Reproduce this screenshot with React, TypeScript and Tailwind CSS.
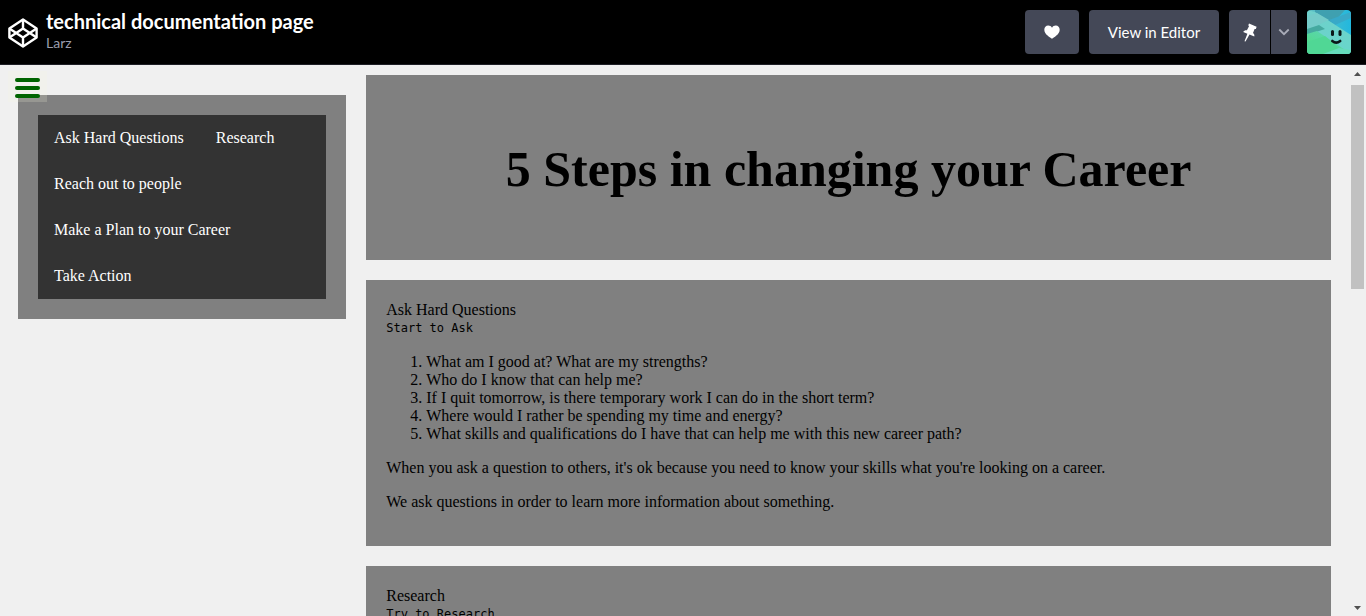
import type { ReactNode } from "react";

const navLinks = [
  { label: "Ask Hard Questions", href: "#Ask_Hard_Questions" },
  { label: "Research", href: "#Research" },
  { label: "Reach out to people", href: "#Reach_out_to_people" },
  { label: "Make a Plan to your Career", href: "#Make_a_Plan_to_your_Career" },
  { label: "Take Action", href: "#Take_Action" },
];

const questions = [
  "What am I good at? What are my strengths?",
  "Who do I know that can help me?",
  "If I quit tomorrow, is there temporary work I can do in the short term?",
  "Where would I rather be spending my time and energy?",
  "What skills and qualifications do I have that can help me with this new career path?",
];

function Logo() {
  return (
    <svg viewBox="0 0 30 30" className="h-[30px] w-[30px]" fill="none" stroke="#fff" strokeWidth="2.4" strokeLinejoin="round" aria-hidden="true">
      <path d="M15 1.500 28.600 10.400V19.600L15 28.500 1.400 19.600V10.400Z" />
      <path d="M15 1.500V10.600L28.600 19.600M15 10.600 1.400 19.600M15 28.500V19.400L1.400 10.400M15 19.400 28.600 10.400" />
    </svg>
  );
}

function Avatar() {
  return (
    <svg viewBox="0 0 44 44" className="h-11 w-11 rounded" role="img" aria-label="Profile">
      <defs>
        <linearGradient id="sky" x1="0" y1="0" x2="1" y2="0">
          <stop offset="0" stopColor="#62bfc0" />
          <stop offset="1" stopColor="#22b8de" />
        </linearGradient>
        <linearGradient id="grass" x1="0" y1="1" x2="1" y2="0">
          <stop offset="0" stopColor="#4fdc7c" />
          <stop offset="1" stopColor="#5fd3c4" />
        </linearGradient>
        <linearGradient id="band" x1="0" y1="0" x2="1" y2="1">
          <stop offset="0" stopColor="#6fcfcb" />
          <stop offset="1" stopColor="#68d6cb" />
        </linearGradient>
      </defs>
      <rect width="44" height="44" fill="url(#sky)" />
      <path d="M8 0H38L26 13 8 3Z" fill="#3fa0b0" />
      <path d="M22 10 44 2V8L28 15Z" fill="#38a9c8" />
      <path d="M0 0 8 2 44 25V44H0Z" fill="url(#band)" />
      <path d="M10 3 22 10 0 20V6Z" fill="#74cbc9" />
      <path d="M0 19 12 15 18 19 0 25Z" fill="#45a9a0" />
      <path d="M0 24 10 21 44 44H0Z" fill="url(#grass)" />
      <path d="M18 26 32 38 18 44H0V32Z" fill="#50d795" />
      <path d="M32 38 44 40V44H16Z" fill="#66dbbb" />
      <rect x="24" y="20" width="3" height="6" rx="1.5" fill="#0b1718" />
      <rect x="31.500" y="20" width="3" height="6" rx="1.5" fill="#0b1718" />
      <path d="M25.300 31Q29.200 34.200 33.200 31" fill="none" stroke="#0b1718" strokeWidth="2.6" strokeLinecap="round" />
    </svg>
  );
}

function TopBar() {
  const button = "flex h-11 items-center justify-center bg-[#444857] text-white";
  return (
    <header className="flex h-[65px] shrink-0 items-center justify-between border-b border-[#1e1f26] bg-black pr-[15px] pl-2 font-[Lato,sans-serif]">
      <div className="flex items-center gap-2">
        <a href="#home" aria-label="Home" className="mt-px">
          <Logo />
        </a>
        <div className="pb-0.5">
          <h1 className="text-[20px] leading-6 font-bold text-white">technical documentation page</h1>
          <a href="#author" className="block text-[14px] leading-5 text-[#9b9dad]">
            Larz
          </a>
        </div>
      </div>
      <div className="flex items-center gap-2.5">
        <button type="button" aria-label="Love" className={`${button} w-[54px] rounded`}>
          <svg viewBox="0 0 16 14" className="h-3.5 w-4" fill="currentColor">
            <path d="M8 13.800C6.600 12.500.3 9.500.3 4.700.3 2.300 2 .4 4.200.4 5.900.4 7.300 1.300 8 2.700 8.700 1.300 10.100.4 11.800.4 14 .4 15.700 2.300 15.700 4.700 15.700 9.500 9.400 12.500 8 13.800Z" />
          </svg>
        </button>
        <a href="#editor" className={`${button} w-[130px] rounded text-[15px]`}>
          View in Editor
        </a>
        <div className="flex gap-px">
          <button type="button" aria-label="Pin" className={`${button} w-[41px] rounded-l`}>
            <svg viewBox="0 0 14 19" className="h-[19px] w-3.5" fill="currentColor">
              <path d="M6 .4 13.600 3.700 12.900 6 11.600 5.900 10 10C11.200 10.900 11.600 12.200 11.300 13.500L6.500 11.600 2.500 18.500 1.500 18.200 4.400 10.800.2 9C.9 7.700 2.200 7 3.900 7.200L6 3.300 5.300 2.300Z" />
            </svg>
          </button>
          <button type="button" aria-label="Pin options" className={`${button} w-[26px] rounded-r`}>
            <svg viewBox="0 0 12 8" className="h-2 w-3" fill="none" stroke="#a9acb8" strokeWidth="1.800">
              <path d="M1.300 1.500 6 6.200 10.700 1.500" />
            </svg>
          </button>
        </div>
        <Avatar />
      </div>
    </header>
  );
}

function Section({ title, code, children }: { title: string; code: string; children?: ReactNode }) {
  return (
    <section id={title.replaceAll(" ", "_")} className="bg-[#808080] px-5 pt-[21px] pb-[19px]">
      <h2>{title}</h2>
      <code className="block font-['DejaVu_Sans_Mono',monospace] text-[12px] leading-[18px]">{code}</code>
      <div className="flex flex-col gap-4 py-4">{children}</div>
    </section>
  );
}

function ScrollBar() {
  return (
    <div className="flex w-[17px] shrink-0 flex-col items-center bg-[#f0f0f0] py-1.5" aria-hidden="true">
      <svg viewBox="0 0 7 4" className="mt-px h-1 w-[7px]" fill="#505050">
        <path d="M0 4 3.500 0 7 4Z" />
      </svg>
      <div className="mt-[9px] h-[204px] w-[13px] bg-[#c1c1c1]" />
      <svg viewBox="0 0 7 4" className="mt-auto h-1 w-[7px]" fill="#505050">
        <path d="M0 0 3.500 4 7 0Z" />
      </svg>
    </div>
  );
}

export default function App() {
  return (
    <div className="flex h-screen flex-col overflow-hidden">
      <TopBar />
      <div className="flex min-h-0 flex-1 bg-[#f0f0f0] font-['Liberation_Serif',serif] text-[16px] leading-[18px] text-black">
        <div className="relative flex min-w-0 flex-1 items-start gap-5 overflow-hidden px-[18px] pt-2.5">
          <nav className="mt-5 w-1/4 shrink-0 bg-[#808080] p-5">
            <ul className="flex flex-wrap bg-[#333]">
              {navLinks.map((link) => (
                <li key={link.label}>
                  <a href={link.href} className="block px-4 py-3.5 text-white">
                    {link.label}
                  </a>
                </li>
              ))}
            </ul>
          </nav>
          <main className="flex min-w-0 flex-1 flex-col gap-5">
            <div className="bg-[#808080] px-5 pt-[66px] pb-[62px] text-center">
              <h1 className="text-[50px] leading-[57px] font-bold">5 Steps in changing your Career</h1>
            </div>
            <Section title="Ask Hard Questions" code="Start to Ask">
              <ol className="list-decimal pl-10">
                {questions.map((question) => (
                  <li key={question}>{question}</li>
                ))}
              </ol>
              <p>When you ask a question to others, it's ok because you need to know your skills what you're looking on a career.</p>
              <p>We ask questions in order to learn more information about something.</p>
            </Section>
            <Section title="Research" code="Try to Research" />
          </main>
          <button type="button" aria-label="Menu" className="absolute top-1.5 left-2 flex flex-col gap-1 bg-[#f5f5dc]/20 px-[7px] pt-[7px] pb-1">
            <span className="h-1 w-[25px] rounded-full bg-[#006400]" />
            <span className="h-1 w-[25px] rounded-full bg-[#006400]" />
            <span className="h-1 w-[25px] rounded-full bg-[#006400]" />
          </button>
        </div>
        <ScrollBar />
      </div>
    </div>
  );
}
